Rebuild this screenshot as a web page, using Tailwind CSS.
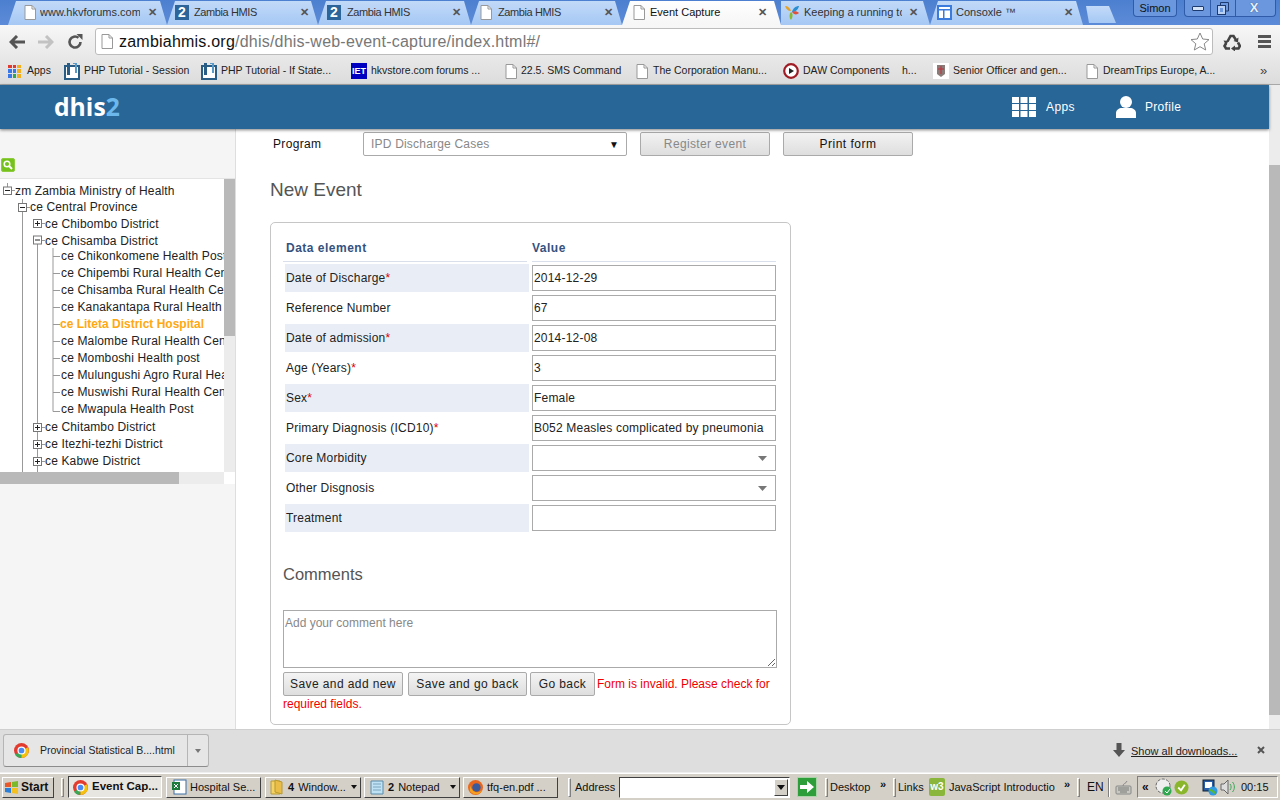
<!DOCTYPE html>
<html>
<head>
<meta charset="utf-8">
<title>Event Capture</title>
<script src="https://cdn.jsdelivr.net/npm/@tailwindcss/browser@4"></script>
</head>
<body class="[font-family:'Liberation_Sans',sans-serif]">
<div class="w-[1280px] h-[800px] overflow-hidden flex flex-col bg-white text-[12px] text-[#222]">

  <!-- tab strip -->
  <div class="h-[25px] flex pl-[8px] bg-gradient-to-b from-[#4d7fd0] to-[#5c8cd8] relative text-[11px]">
    <div class="w-[159px] h-[25px] flex items-center pl-[16px] pr-[10px] gap-[4px] bg-gradient-to-b from-[#c3daf9] to-[#a5c8f4] [clip-path:polygon(8px_1px,calc(100%-7px)_1px,100%_100%,0_100%)] text-[#333]">
      <svg class="w-[12px] h-[15px] shrink-0" viewBox="0 0 12 15"><path d="M1 .5h7l3.500 3.500v10.500h-10.500z" fill="#fff" stroke="#999"/><path d="M8 .5v3.500h3.500" fill="none" stroke="#999"/></svg>
      <span class="whitespace-nowrap overflow-hidden w-[100px]">www.hkvforums.com</span>
      <span class="font-bold text-[#555] text-[11px] ml-auto">✕</span>
    </div>
    <div class="w-[151px] h-[25px] flex items-center pl-[8px] pr-[9px] gap-[5px] bg-gradient-to-b from-[#c3daf9] to-[#a5c8f4] [clip-path:polygon(8px_1px,calc(100%-7px)_1px,100%_100%,0_100%)] text-[#333]">
      <span class="w-[14px] h-[15px] bg-[#2b6599] text-white font-bold text-[14px] leading-[15px] text-center shrink-0">2</span>
      <span class="whitespace-nowrap tracking-[-0.4px]">Zambia HMIS</span>
      <span class="font-bold text-[#555] ml-auto">✕</span>
    </div>
    <div class="w-[153px] h-[25px] flex items-center pl-[9px] pr-[10px] gap-[6px] bg-gradient-to-b from-[#c3daf9] to-[#a5c8f4] [clip-path:polygon(8px_1px,calc(100%-7px)_1px,100%_100%,0_100%)] text-[#333]">
      <span class="w-[14px] h-[15px] bg-[#2b6599] text-white font-bold text-[14px] leading-[15px] text-center shrink-0">2</span>
      <span class="whitespace-nowrap tracking-[-0.4px]">Zambia HMIS</span>
      <span class="font-bold text-[#555] ml-auto">✕</span>
    </div>
    <div class="w-[151px] h-[25px] flex items-center pl-[9px] pr-[9px] gap-[6px] bg-gradient-to-b from-[#c3daf9] to-[#a5c8f4] [clip-path:polygon(8px_1px,calc(100%-7px)_1px,100%_100%,0_100%)] text-[#333]">
      <svg class="w-[12px] h-[15px] shrink-0" viewBox="0 0 12 15"><path d="M1 .5h7l3.500 3.500v10.500h-10.500z" fill="#fff" stroke="#999"/><path d="M8 .5v3.500h3.500" fill="none" stroke="#999"/></svg>
      <span class="whitespace-nowrap tracking-[-0.4px]">Zambia HMIS</span>
      <span class="font-bold text-[#555] ml-auto">✕</span>
    </div>
    <div class="w-[159px] h-[25px] flex items-center pl-[11px] pr-[14px] gap-[5px] bg-gradient-to-b from-[#ffffff] to-[#f6f6f6] [clip-path:polygon(8px_1px,calc(100%-7px)_1px,100%_100%,0_100%)] text-[#111]">
      <svg class="w-[12px] h-[15px] shrink-0" viewBox="0 0 12 15"><path d="M1 .5h7l3.500 3.500v10.500h-10.500z" fill="#fff" stroke="#999"/><path d="M8 .5v3.500h3.500" fill="none" stroke="#999"/></svg>
      <span class="whitespace-nowrap">Event Capture</span>
      <span class="font-bold text-[#555] ml-auto">✕</span>
    </div>
    <div class="w-[149px] h-[25px] flex items-center pl-[3px] pr-[12px] gap-[4px] bg-gradient-to-b from-[#c3daf9] to-[#a5c8f4] [clip-path:polygon(0_1px,calc(100%-7px)_1px,100%_100%,0_100%)] text-[#333]">
      <svg class="w-[16px] h-[16px] shrink-0" viewBox="0 0 16 16"><path d="M1 1c3 0 5 2 6 5C4 6 2 4 1 1z" fill="#e8a020"/><path d="M15 1c-3 0-6 2-7 6 3 0 6-2 7-6z" fill="#2a8fd0"/><path d="M7 7c2 1 2 5 0 8-2-2-2-6 0-8z" fill="#88b82c"/><path d="M8 7c2-1 5-1 7 1-2 2-5 2-7-1z" fill="#e0503a"/></svg>
      <span class="whitespace-nowrap overflow-hidden w-[98px]">Keeping a running to</span>
      <span class="font-bold text-[#555] ml-auto">✕</span>
    </div>
    <div class="w-[153px] h-[25px] flex items-center pl-[7px] pr-[10px] gap-[4px] bg-gradient-to-b from-[#c3daf9] to-[#a5c8f4] [clip-path:polygon(8px_1px,calc(100%-7px)_1px,100%_100%,0_100%)] text-[#333]">
      <svg class="w-[15px] h-[15px] shrink-0" viewBox="0 0 15 15"><rect width="15" height="15" fill="#3a7bdc"/><rect x="2" y="2" width="11" height="11" fill="#fff"/><rect x="2" y="4" width="11" height="1.500" fill="#3a7bdc"/><rect x="6" y="5" width="1.500" height="8" fill="#3a7bdc"/></svg>
      <span class="whitespace-nowrap">Consoxle ™</span>
      <span class="font-bold text-[#555] ml-auto">✕</span>
    </div>
    <div class="w-[32px] h-[17px] mt-[6px] ml-[1px] bg-gradient-to-b from-[#c3daf9] to-[#a5c8f4] [clip-path:polygon(2px_0,calc(100%-7px)_0,100%_100%,5px_100%)]"></div>
    <div class="absolute top-0 left-[1133px] w-[44px] h-[17px] rounded-b-[4px] border border-t-0 border-[#2f5ba8] bg-[#6a97dd] text-[11px] leading-[17px] text-center text-[#111]">Simon</div>
    <div class="absolute top-0 left-[1184px] w-[92px] h-[17px] rounded-b-[4px] border border-t-0 border-[#2f5ba8] bg-[#6a97dd] flex">
      <div class="w-[26px] border-r border-[#2f5ba8] flex items-center justify-center"><span class="w-[12px] h-[5px] border border-[#1d3a70] bg-[#d6e4f8] rounded-[1px]"></span></div>
      <div class="w-[25px] border-r border-[#2f5ba8] flex items-center justify-center">
        <svg class="w-[12px] h-[13px]" viewBox="0 0 12 13"><path d="M3.500 3V.5h8V9H9" fill="none" stroke="#1d3a70"/><rect x=".5" y="3.500" width="8" height="9" fill="#b9d0f2" stroke="#1d3a70"/><rect x="3" y="6" width="3" height="4" fill="#6a97dd"/></svg>
      </div>
      <div class="flex-1 pr-[3px] text-center text-[#e8f0fb] font-bold text-[13px] leading-[15px] [text-shadow:0_0_1px_#1d3a70]">X</div>
    </div>
  </div>

  <!-- toolbar + bookmarks -->
  <div class="h-[60px] bg-gradient-to-b from-[#f7f7f7] to-[#dcdcdc] border-b border-[#a8a8a8] flex flex-col">
    <div class="h-[33px] flex items-center relative">
      <svg class="w-[16px] h-[14px] ml-[9px] shrink-0" viewBox="0 0 16 14"><path d="M8 1 2 7l6 6M2 7h14" fill="none" stroke="#555" stroke-width="3"/></svg>
      <svg class="w-[16px] h-[14px] ml-[13px] shrink-0" viewBox="0 0 16 14"><path d="M8 1l6 6-6 6M14 7H0" fill="none" stroke="#c2c2c2" stroke-width="3"/></svg>
      <svg class="w-[16px] h-[16px] ml-[13px] shrink-0" viewBox="0 0 16 16"><path d="M13.500 8A5.500 5.500 0 1 1 11.500 3.800" fill="none" stroke="#555" stroke-width="2.600"/><path d="M9.500 0h6v6z" fill="#555"/></svg>
      <div class="ml-[12px] w-[1118px] h-[27px] bg-white border border-[#bcbcbc] rounded-[3px] flex items-center pl-[5px]">
        <svg class="w-[12px] h-[15px] shrink-0" viewBox="0 0 12 15"><path d="M1 .5h7l3.500 3.500v10.500h-10.500z" fill="#fff" stroke="#999"/><path d="M8 .5v3.500h3.500" fill="none" stroke="#999"/></svg>
        <span class="ml-[6px] text-[16px] text-[#111] whitespace-nowrap tracking-[0.22px]">zambiahmis.org<span class="text-[#777]">/dhis/dhis-web-event-capture/index.html#/</span></span>
        <svg class="w-[20px] h-[19px] ml-auto mr-[2px]" viewBox="0 0 20 19"><path d="M10 1l2.700 6 6.300.6-4.800 4.200 1.500 6.200L10 14.700 4.300 18l1.500-6.200L1 7.600 7.300 7z" fill="#fff" stroke="#888"/></svg>
      </div>
      <svg class="w-[18px] h-[18px] ml-[10px] shrink-0" viewBox="0 0 18 18"><g fill="none" stroke="#444" stroke-width="2.600"><path d="M4.500 8.500 7.500 3h3l2.500 4"/><path d="M15 9.500l2 3.500-1.500 2.500H11"/><path d="M7 15.500H3L1.500 13l1.700-3"/></g><path d="M15.500 4.500l-.5 5-4.500-1.500zM12 12.500v6l-4-3zM.5 7.500l5 .5-2.500 4z" fill="#444"/></svg>
      <span class="ml-[17px] w-[13px] h-[13px] flex flex-col justify-between"><span class="h-[3px] bg-[#555]"></span><span class="h-[3px] bg-[#555]"></span><span class="h-[3px] bg-[#555]"></span></span>
    </div>
    <div class="h-[26px] flex items-center text-[10.500px] text-[#222] relative whitespace-nowrap">
      <span class="ml-[8px] w-[13px] h-[13px] grid grid-cols-3 gap-[1px] shrink-0">
        <i class="bg-[#e23a2e]"></i><i class="bg-[#e23a2e]"></i><i class="bg-[#f2b01e]"></i>
        <i class="bg-[#3b78e7]"></i><i class="bg-[#3b78e7]"></i><i class="bg-[#f2b01e]"></i>
        <i class="bg-[#3b78e7]"></i><i class="bg-[#2fa84f]"></i><i class="bg-[#f2b01e]"></i>
      </span>
      <span class="ml-[6px] w-[37px] shrink-0">Apps</span>
      <svg class="w-[16px] h-[17px] shrink-0" viewBox="0 0 16 17"><rect x="1" y="3" width="14" height="13" fill="#fff" stroke="#2a5d85" stroke-width="2"/><rect x="3" y="0" width="3" height="2" fill="#2a5d85"/><rect x="3" y="4" width="3" height="8" fill="#2a5d85"/><path d="M9 0h3v10" fill="none" stroke="#5a9ac8" stroke-width="2"/></svg>
      <span class="ml-[4px] w-[105px] shrink-0">PHP Tutorial - Session</span>
      <svg class="ml-[12px] w-[16px] h-[17px] shrink-0" viewBox="0 0 16 17"><rect x="1" y="3" width="14" height="13" fill="#fff" stroke="#2a5d85" stroke-width="2"/><rect x="3" y="0" width="3" height="2" fill="#2a5d85"/><rect x="3" y="4" width="3" height="8" fill="#2a5d85"/><path d="M9 0h3v10" fill="none" stroke="#5a9ac8" stroke-width="2"/></svg>
      <span class="ml-[4px] w-[115px] shrink-0">PHP Tutorial - If State...</span>
      <span class="ml-[15px] w-[16px] h-[16px] bg-[#0000c0] text-white text-center font-bold text-[9px] leading-[16px] shrink-0">IET</span>
      <span class="ml-[4px] w-[114px] shrink-0">hkvstore.com forums ...</span>
      <svg class="ml-[20px] w-[12px] h-[15px] shrink-0" viewBox="0 0 12 15"><path d="M1 .5h7l3.500 3.500v10.500h-10.500z" fill="#fff" stroke="#999"/><path d="M8 .5v3.500h3.500" fill="none" stroke="#999"/></svg>
      <span class="ml-[4px] w-[100px] shrink-0">22.5. SMS Command</span>
      <svg class="ml-[15px] w-[12px] h-[15px] shrink-0" viewBox="0 0 12 15"><path d="M1 .5h7l3.500 3.500v10.500h-10.500z" fill="#fff" stroke="#999"/><path d="M8 .5v3.500h3.500" fill="none" stroke="#999"/></svg>
      <span class="ml-[5px] w-[117px] shrink-0">The Corporation Manu...</span>
      <svg class="ml-[13px] w-[16px] h-[16px] shrink-0" viewBox="0 0 16 16"><circle cx="8" cy="8" r="6.800" fill="#fff" stroke="#a01c24" stroke-width="2.200"/><path d="M6 5l5 3-5 3z" fill="#222"/></svg>
      <span class="ml-[4px] w-[87px] shrink-0">DAW Components</span>
      <span class="ml-[12px] w-[16px] shrink-0">h...</span>
      <svg class="ml-[15px] w-[16px] h-[16px] shrink-0" viewBox="0 0 16 16"><rect width="16" height="16" fill="#fff"/><path d="M4 2h8v9l-4 3-4-3z" fill="#8a7a78"/><path d="M8 3v8M5 6h6" stroke="#c0303a"/></svg>
      <span class="ml-[4px] w-[118px] shrink-0">Senior Officer and gen...</span>
      <svg class="ml-[15px] w-[12px] h-[15px] shrink-0" viewBox="0 0 12 15"><path d="M1 .5h7l3.500 3.500v10.500h-10.500z" fill="#fff" stroke="#999"/><path d="M8 .5v3.500h3.500" fill="none" stroke="#999"/></svg>
      <span class="ml-[5px] w-[118px] shrink-0">DreamTrips  Europe, A...</span>
      <span class="absolute left-[1260px] text-[13px] text-[#444]">»</span>
    </div>
  </div>

  <!-- browser viewport -->
  <div class="h-[644px] flex bg-white">
    <div class="w-[1269px] flex flex-col">
      <div class="h-[44px] shrink-0 bg-[#276696] flex items-center relative z-10 shadow-[0_1px_3px_rgba(0,0,0,0.5)] text-white">
        <span class="ml-[54px] w-[66px] [font-family:'Open_Sans',sans-serif] font-bold text-[24.700px] leading-none whitespace-nowrap">dhis<span class="text-[#6cb8ec]">2</span></span>
        <svg class="ml-[892px] w-[24px] h-[20px] shrink-0" viewBox="0 0 24 20" fill="#fff"><rect width="7" height="6"/><rect x="8.500" width="7" height="6"/><rect x="17" width="7" height="6"/><rect y="7" width="7" height="6"/><rect x="8.500" y="7" width="7" height="6"/><rect x="17" y="7" width="7" height="6"/><rect y="14" width="7" height="6"/><rect x="8.500" y="14" width="7" height="6"/><rect x="17" y="14" width="7" height="6"/></svg>
        <span class="ml-[10px] w-[29px] text-[12px] tracking-[0.4px]">Apps</span>
        <svg class="ml-[41px] w-[20px] h-[22px] shrink-0" viewBox="0 0 20 22" fill="#fff"><circle cx="10" cy="6" r="6"/><path d="M0 22v-5c0-3 3-5 6-5h8c3 0 6 2 6 5v5z"/></svg>
        <span class="ml-[9px] text-[12px] tracking-[0.3px]">Profile</span>
      </div>
      <div class="flex-1 flex min-h-0">
        <!-- sidebar -->
        <div class="w-[236px] shrink-0 bg-[#f5f5f5] border-r border-[#dedede] flex flex-col">
          <div class="h-[49px] shrink-0 flex items-end pb-[6px] pl-[1px]">
            <span class="w-[14px] h-[14px] rounded-[2px] bg-[#76c21c] border border-[#8fcc40] flex items-center justify-center">
              <svg class="w-[10px] h-[10px]" viewBox="0 0 10 10"><circle cx="4" cy="4" r="2.800" fill="none" stroke="#fff" stroke-width="1.500"/><path d="M6 6l3 3" stroke="#fff" stroke-width="2"/></svg>
            </span>
          </div>
          <div class="h-[306px] w-[235px] shrink-0 bg-white border-t border-[#e4e4e4] flex flex-col tracking-[0.15px]">
            <div class="h-[293px] flex">
              <div class="w-[224px] relative overflow-hidden pt-[4px] text-[12px] text-[#222]">
                <svg class="absolute left-0 top-0 w-[224px] h-[293px]" viewBox="0 179 224 293">
                  <g stroke="#999" fill="none">
                    <path d="M7.500 183v4M12 190.500h3M22.500 199v4M27 207.500h3M22.500 212v260M37.500 243v229M42 223.500h3M42 240.500h3M42 427.500h3M42 444.500h3M42 461.500h3M53 248v163.500h7M53 256.500h7M53 273.500h7M53 290.500h7M53 307.500h7M53 324.500h7M53 341.500h7M53 358.500h7M53 375.500h7M53 392.500h7"/>
                    <g fill="#fff" stroke="#777">
                      <rect x="3.500" y="187" width="8" height="7.500"/><rect x="18.500" y="203.500" width="8" height="8"/><rect x="33.500" y="219.500" width="8" height="8"/><rect x="33.500" y="236" width="8" height="8"/><rect x="33.500" y="423.500" width="8" height="8"/><rect x="33.500" y="440.500" width="8" height="8"/><rect x="33.500" y="457.500" width="8" height="8"/>
                    </g>
                    <path stroke="#222" d="M5 190.500h5M20 207.500h5M35 223.500h5M37.500 221v5M35 240h5M35 427.500h5M37.500 425v5M35 444.500h5M37.500 442v5M35 461.500h5M37.500 459v5"/>
                  </g>
                </svg>
                <div class="h-[16px] leading-[16px] pl-[15px] whitespace-nowrap relative">zm Zambia Ministry of Health</div>
                <div class="h-[17px] leading-[17px] pl-[30px] whitespace-nowrap relative">ce Central Province</div>
                <div class="h-[16px] leading-[16px] pl-[45px] whitespace-nowrap relative">ce Chibombo District</div>
                <div class="h-[16px] leading-[18px] pl-[45px] whitespace-nowrap relative">ce Chisamba District</div>
                <div class="h-[17px] leading-[17px] pl-[61px] whitespace-nowrap relative">ce Chikonkomene Health Post</div>
                <div class="h-[17px] leading-[17px] pl-[61px] whitespace-nowrap relative">ce Chipembi Rural Health Centre</div>
                <div class="h-[17px] leading-[17px] pl-[61px] whitespace-nowrap relative">ce Chisamba Rural Health Centre</div>
                <div class="h-[17px] leading-[17px] pl-[61px] whitespace-nowrap relative">ce Kanakantapa Rural Health Centre</div>
                <div class="h-[17px] leading-[17px] pl-[60px] whitespace-nowrap relative font-bold text-[#ffa812] tracking-normal">ce Liteta District Hospital</div>
                <div class="h-[17px] leading-[17px] pl-[61px] whitespace-nowrap relative">ce Malombe Rural Health Centre</div>
                <div class="h-[17px] leading-[17px] pl-[61px] whitespace-nowrap relative">ce Momboshi Health post</div>
                <div class="h-[17px] leading-[17px] pl-[61px] whitespace-nowrap relative">ce Mulungushi Agro Rural Health</div>
                <div class="h-[17px] leading-[17px] pl-[61px] whitespace-nowrap relative">ce Muswishi Rural Health Centre</div>
                <div class="h-[17px] leading-[17px] pl-[61px] whitespace-nowrap relative">ce Mwapula Health Post</div>
                <div class="h-[18px] leading-[18px] pl-[45px] whitespace-nowrap relative">ce Chitambo District</div>
                <div class="h-[17px] leading-[17px] pl-[45px] whitespace-nowrap relative">ce Itezhi-tezhi District</div>
                <div class="h-[17px] leading-[17px] pl-[45px] whitespace-nowrap relative">ce Kabwe District</div>
              </div>
              <div class="w-[11px] bg-[#ececec]"><div class="h-[157px] bg-[#b9b9b9]"></div></div>
            </div>
            <div class="h-[12px] flex">
              <div class="w-[224px] bg-[#ececec]"><div class="w-[179px] h-full bg-[#b9b9b9]"></div></div>
            </div>
          </div>
        </div>
        <!-- main -->
        <div class="flex-1 min-w-0 pt-[3px] pl-[37px] tracking-[0.2px] relative">
          <div class="flex items-center h-[24px] tracking-[0.35px]">
            <span class="w-[90px] text-[#111]">Program</span>
            <div class="w-[264px] h-[24px] border border-[#aaa] rounded-[2px] bg-white flex items-center pl-[7px] pr-[7px] text-[#888] tracking-[0.2px]">
              <span>IPD Discharge Cases</span>
              <span class="ml-auto text-[#111] text-[10px]">▼</span>
            </div>
            <button class="ml-[13px] w-[130px] h-[24px] border border-[#aaa] rounded-[2px] bg-gradient-to-b from-[#f2f2f2] to-[#dedede] text-[#888]">Register event</button>
            <button class="ml-[13px] w-[130px] h-[24px] border border-[#aaa] rounded-[2px] bg-gradient-to-b from-[#f2f2f2] to-[#dedede] text-[#111] tracking-[0.5px]">Print form</button>
          </div>
          <h2 class="mt-[23px] -ml-[3px] h-[22px] text-[19px] leading-[22px] text-[#555] tracking-normal font-normal">New Event</h2>
          <div class="mt-[21px] w-[521px] h-[503px] -ml-[3px] border border-[#c6c6c6] rounded-[5px] pl-[12px] pt-[15px]">
            <div class="flex gap-[5px] w-[493px] h-[24px] font-bold text-[#35527f] tracking-[0.5px]">
              <div class="w-[244px] border-b border-[#d9e0ec] pl-[3px] leading-[21px]">Data element</div>
              <div class="w-[244px] border-b border-[#d9e0ec] leading-[21px]">Value</div>
            </div>
            <div class="flex flex-col gap-[2px] mt-[2px]">
              <div class="h-[28px] flex items-center"><span class="w-[244px] h-full bg-[#e9eef6] pl-[1px] flex items-center ml-[2px]">Date of Discharge<span class="text-[#e00000]">*</span></span><input class="ml-[3px] w-[244px] h-[26px] border border-[#aaa] bg-white px-[1px] text-[#222]" value="2014-12-29"></div>
              <div class="h-[28px] flex items-center"><span class="w-[244px] h-full pl-[1px] flex items-center ml-[2px]">Reference Number</span><input class="ml-[3px] w-[244px] h-[26px] border border-[#aaa] bg-white px-[1px] text-[#222]" value="67"></div>
              <div class="h-[28px] flex items-center"><span class="w-[244px] h-full bg-[#e9eef6] pl-[1px] flex items-center ml-[2px]">Date of admission<span class="text-[#e00000]">*</span></span><input class="ml-[3px] w-[244px] h-[26px] border border-[#aaa] bg-white px-[1px] text-[#222]" value="2014-12-08"></div>
              <div class="h-[28px] flex items-center"><span class="w-[244px] h-full pl-[1px] flex items-center ml-[2px]">Age (Years)<span class="text-[#e00000]">*</span></span><input class="ml-[3px] w-[244px] h-[26px] border border-[#aaa] bg-white px-[1px] text-[#222]" value="3"></div>
              <div class="h-[28px] flex items-center"><span class="w-[244px] h-full bg-[#e9eef6] pl-[1px] flex items-center ml-[2px]">Sex<span class="text-[#e00000]">*</span></span><input class="ml-[3px] w-[244px] h-[26px] border border-[#aaa] bg-white px-[1px] text-[#222]" value="Female"></div>
              <div class="h-[28px] flex items-center"><span class="w-[244px] h-full pl-[1px] flex items-center ml-[2px]">Primary Diagnosis (ICD10)<span class="text-[#e00000]">*</span></span><input class="ml-[3px] w-[244px] h-[26px] border border-[#aaa] bg-white px-[1px] text-[#222]" value="B052 Measles complicated by pneumonia"></div>
              <div class="h-[28px] flex items-center"><span class="w-[244px] h-full bg-[#e9eef6] pl-[1px] flex items-center ml-[2px]">Core Morbidity</span><div class="ml-[3px] w-[244px] h-[26px] border border-[#aaa] bg-white flex items-center justify-end pr-[8px]"><svg class="w-[9px] h-[5px]" viewBox="0 0 9 5"><path d="M0 0h9L4.500 5z" fill="#777"/></svg></div></div>
              <div class="h-[28px] flex items-center"><span class="w-[244px] h-full pl-[1px] flex items-center ml-[2px]">Other Disgnosis</span><div class="ml-[3px] w-[244px] h-[26px] border border-[#aaa] bg-white flex items-center justify-end pr-[8px]"><svg class="w-[9px] h-[5px]" viewBox="0 0 9 5"><path d="M0 0h9L4.500 5z" fill="#777"/></svg></div></div>
              <div class="h-[28px] flex items-center"><span class="w-[244px] h-full bg-[#e9eef6] pl-[1px] flex items-center ml-[2px]">Treatment</span><input class="ml-[3px] w-[244px] h-[26px] border border-[#aaa] bg-white px-[1px] text-[#222]" value=""></div>
            </div>
            <h3 class="mt-[32px] h-[20px] text-[16.500px] leading-[20px] text-[#555] tracking-normal font-normal">Comments</h3>
            <textarea class="block mt-[26px] w-[494px] h-[58px] border border-[#aaa] bg-white px-[1px] py-[3px] text-[12px] tracking-normal placeholder:text-[#888] outline-none" placeholder="Add your comment here"></textarea>
            <div class="mt-[4px] w-[496px] leading-[16px] text-[#f00000] tracking-normal">
              <button class="h-[24px] w-[120px] border border-[#aaa] rounded-[2px] bg-gradient-to-b from-[#f4f4f4] to-[#dedede] text-[#222] tracking-[0.4px]">Save and add new</button><button class="ml-[5px] h-[24px] w-[119px] border border-[#aaa] rounded-[2px] bg-gradient-to-b from-[#f4f4f4] to-[#dedede] text-[#222] tracking-[0.4px]">Save and go back</button><button class="ml-[3px] h-[24px] w-[65px] border border-[#aaa] rounded-[2px] bg-gradient-to-b from-[#f4f4f4] to-[#dedede] text-[#222] tracking-[0.4px]">Go back</button><span class="ml-[2px]">Form is invalid. Please check for required fields.</span>
            </div>
          </div>
        </div>
      </div>
    </div>
    <div class="w-[11px] bg-[#ececec]"><div class="mt-[80px] h-[550px] bg-[#b9b9b9]"></div></div>
  </div>

  <!-- downloads bar -->
  <div class="h-[44px] bg-[#dedede] border-t border-[#cfcfcf] border-b border-b-[#efefef] flex items-start relative">
    <div class="ml-[3px] mt-[4px] w-[206px] h-[33px] rounded-[3px] border border-[#b5b5b5] border-b-[#8c8c8c] bg-[#e6e6e6] flex items-center">
      <svg class="ml-[10px] w-[15px] h-[15px]" viewBox="0 0 16 16"><circle cx="8" cy="8" r="8" fill="#e33b2e"/><path d="M8 8L1 12.500A8 8 0 0 0 8 16z" fill="#3aa757"/><path d="M8 8l7 -3.500A8 8 0 0 1 8 16z" fill="#f4c20d"/><circle cx="8" cy="8" r="3.700" fill="#4a8af4" stroke="#fff" stroke-width="1.300"/></svg>
      <span class="ml-[11px] text-[10.500px] text-[#222] whitespace-nowrap w-[147px]">Provincial Statistical B....html</span>
      <span class="h-full border-l border-[#b5b5b5] flex-1 flex items-center justify-center"><span class="w-0 h-0 border-x-[3px] border-x-transparent border-t-[4px] border-t-[#777]"></span></span>
    </div>
    <svg class="absolute left-[1113px] top-[13px] w-[12px] h-[14px]" viewBox="0 0 12 14"><path d="M3.500 0h5v7H12l-6 7-6-7h3.500z" fill="#555"/></svg>
    <span class="absolute left-[1131px] top-[13px] text-[11px] underline text-[#222] whitespace-nowrap">Show all downloads...</span>
    <svg class="absolute left-[1257px] top-[16px] w-[8px] h-[8px]" viewBox="0 0 8 8"><path d="M1 1l6 6M7 1L1 7" stroke="#555" stroke-width="2"/></svg>
  </div>

  <!-- taskbar -->
  <div class="h-[27px] bg-[#d4d0c8] border-t border-white flex items-center text-[11px] text-[#111] relative whitespace-nowrap">
    <button class="ml-[2px] w-[52px] h-[21px] shrink-0 bg-[#d4d0c8] border border-t-white border-l-white border-r-[#404040] border-b-[#404040] flex items-center pl-[1px] gap-[2px] font-bold text-[12px]">
      <svg class="w-[15px] h-[15px]" viewBox="0 0 15 15"><path d="M1 3l6-1v5H1z" fill="#e8582a"/><path d="M8 2l6-1v6H8z" fill="#7ab82c"/><path d="M1 8h6v5l-6-1z" fill="#2a7fd8"/><path d="M8 8h6v6l-6-1z" fill="#f4c020"/></svg>Start
    </button>
    <span class="ml-[7px] w-[3px] h-[19px] shrink-0 border border-t-white border-l-white border-r-[#808080] border-b-[#808080]"></span>
    <button class="ml-[4px] w-[94px] h-[22px] shrink-0 bg-[#e8e6e0] border border-t-[#404040] border-l-[#404040] border-r-white border-b-white flex items-center pl-[4px] gap-[4px] font-bold text-[11.500px]">
      <svg class="w-[15px] h-[15px] shrink-0" viewBox="0 0 16 16"><circle cx="8" cy="8" r="8" fill="#e33b2e"/><path d="M8 8L1 12.500A8 8 0 0 0 8 16z" fill="#3aa757"/><path d="M8 8l7 -3.500A8 8 0 0 1 8 16z" fill="#f4c20d"/><circle cx="8" cy="8" r="3.700" fill="#4a8af4" stroke="#fff" stroke-width="1.300"/></svg>Event Cap...
    </button>
    <button class="ml-[4px] w-[95px] h-[21px] shrink-0 bg-[#d4d0c8] border border-t-white border-l-white border-r-[#404040] border-b-[#404040] flex items-center pl-[4px] gap-[3px]">
      <svg class="w-[16px] h-[16px] shrink-0" viewBox="0 0 16 16"><rect x="3" y="1" width="12" height="14" fill="#fff" stroke="#3a6ea5"/><rect x="1" y="3" width="8" height="8" fill="#1d7a3a"/><path d="M3 5l4 4M7 5L3 9" stroke="#fff"/></svg>Hospital Se...
    </button>
    <button class="ml-[4px] w-[96px] h-[21px] shrink-0 bg-[#d4d0c8] border border-t-white border-l-white border-r-[#404040] border-b-[#404040] flex items-center pl-[4px] gap-[4px]">
      <svg class="w-[14px] h-[16px] shrink-0" viewBox="0 0 14 16"><path d="M1 2h9v13H1z" fill="#f4d264" stroke="#b89a30"/><path d="M5 1l7 2v12l-7-2z" fill="#e9bd48" stroke="#b89a30"/></svg><b>4</b> Window...<span class="ml-auto mr-[3px] w-0 h-0 border-x-[3px] border-x-transparent border-t-[4px] border-t-[#111]"></span>
    </button>
    <button class="ml-[3px] w-[96px] h-[21px] shrink-0 bg-[#d4d0c8] border border-t-white border-l-white border-r-[#404040] border-b-[#404040] flex items-center pl-[4px] gap-[4px]">
      <svg class="w-[15px] h-[16px] shrink-0" viewBox="0 0 15 16"><path d="M2 2h12v13H2z" fill="#bfe3f4" stroke="#5a8aa8"/><path d="M4 5h8M4 8h8M4 11h8" stroke="#7aa4bc"/></svg><b>2</b> Notepad<span class="ml-auto mr-[3px] w-0 h-0 border-x-[3px] border-x-transparent border-t-[4px] border-t-[#111]"></span>
    </button>
    <button class="ml-[3px] w-[95px] h-[21px] shrink-0 bg-[#d4d0c8] border border-t-white border-l-white border-r-[#404040] border-b-[#404040] flex items-center pl-[4px] gap-[4px]">
      <svg class="w-[15px] h-[15px] shrink-0" viewBox="0 0 16 16"><circle cx="8" cy="8" r="8" fill="#e8661e"/><circle cx="9" cy="8" r="4.500" fill="#3a5a9c"/><path d="M2 5c2 8 8 10 13 6-2 5-9 6-13 1z" fill="#f4a020"/></svg>tfq-en.pdf ...
    </button>
    <span class="ml-[10px] w-[3px] h-[19px] shrink-0 border border-t-white border-l-white border-r-[#808080] border-b-[#808080]"></span>
    <span class="ml-[4px] w-[39px] shrink-0">Address</span>
    <div class="ml-[5px] w-[171px] h-[21px] shrink-0 bg-white border border-t-[#404040] border-l-[#404040] border-r-white border-b-white flex justify-end items-center pr-[1px]">
      <span class="w-[14px] h-[17px] bg-[#d4d0c8] border border-t-white border-l-white border-r-[#404040] border-b-[#404040] flex items-center justify-center"><span class="w-0 h-0 border-x-[4px] border-x-transparent border-t-[5px] border-t-[#111]"></span></span>
    </div>
    <span class="ml-[7px] w-[20px] h-[20px] shrink-0 bg-[#2e9e3a] border border-[#a8d4a8] flex items-center justify-center">
      <svg class="w-[14px] h-[12px]" viewBox="0 0 14 12"><path d="M0 4h7V0l7 6-7 6V8H0z" fill="#fff"/></svg>
    </span>
    <span class="ml-[8px] w-[3px] h-[19px] shrink-0 border border-t-white border-l-white border-r-[#808080] border-b-[#808080]"></span>
    <span class="ml-[2px] w-[40px] shrink-0">Desktop</span>
    <span class="ml-[10px] w-[7px] shrink-0 font-bold -mt-[6px]">»</span>
    <span class="ml-[6px] w-[3px] h-[19px] shrink-0 border border-t-white border-l-white border-r-[#808080] border-b-[#808080]"></span>
    <span class="ml-[2px] w-[23px] shrink-0">Links</span>
    <span class="ml-[8px] w-[16px] h-[18px] shrink-0 rounded-[2px] bg-[#8ab63c] text-white text-[10px] font-bold text-center leading-[17px]">w3</span>
    <span class="ml-[4px] w-[105px] shrink-0">JavaScript Introductio</span>
    <span class="ml-[10px] w-[7px] shrink-0 font-bold -mt-[6px]">»</span>
    <span class="ml-[6px] w-[3px] h-[19px] shrink-0 border border-t-white border-l-white border-r-[#808080] border-b-[#808080]"></span>
    <span class="ml-[7px] w-[14px] shrink-0 text-[12px]">EN</span>
    <span class="ml-[7px] w-[2px] h-[19px] shrink-0 border-l border-[#808080] border-r border-r-white"></span>
    <svg class="ml-[5px] w-[17px] h-[15px] shrink-0" viewBox="0 0 17 15"><rect x="1" y="6" width="15" height="8" rx="1" fill="#c8c8c0" stroke="#888"/><path d="M3 8h11M3 10h11M5 12h7" stroke="#777"/><path d="M8 6c0-3 3-2 4-5" fill="none" stroke="#888"/></svg>
    <div class="ml-[5px] w-[141px] h-[22px] shrink-0 border border-t-[#808080] border-l-[#808080] border-r-white border-b-white flex items-center">
      <span class="ml-[4px] w-[8px] shrink-0 font-bold text-[12px]">«</span>
      <svg class="ml-[5px] w-[18px] h-[18px] shrink-0" viewBox="0 0 18 18"><circle cx="8" cy="8" r="7" fill="#eee" stroke="#666" stroke-dasharray="3 1.500"/><circle cx="12" cy="13" r="4.500" fill="#2fa84f"/><path d="M10 13l2 2 3-4" fill="none" stroke="#fff"/></svg>
      <svg class="ml-[1px] w-[15px] h-[15px] shrink-0" viewBox="0 0 16 16"><circle cx="8" cy="8" r="7.500" fill="#8ab62c"/><path d="M4.500 8l3 3 4-6" fill="none" stroke="#fff" stroke-width="2"/></svg>
      <svg class="ml-[13px] w-[16px] h-[17px] shrink-0" viewBox="0 0 16 17"><rect x="1" y="1" width="11" height="11" fill="#2a5da8" stroke="#123"/><rect x="3" y="3" width="7" height="6" fill="#fff"/><circle cx="11" cy="12" r="4.500" fill="#2f9ae0"/><path d="M8 11c2 0 3 2 5 3" stroke="#5ab82c" stroke-width="2" fill="none"/></svg>
      <svg class="ml-[2px] w-[16px] h-[16px] shrink-0" viewBox="0 0 16 16"><path d="M1 5h3l4-4v14l-4-4H1z" fill="#ddd" stroke="#666"/><path d="M10 5c1.500 2 1.500 4 0 6M12.500 3c2.500 3 2.500 7 0 10" fill="none" stroke="#3aa757"/></svg>
      <span class="ml-[5px] shrink-0">00:15</span>
    </div>
  </div>
</div>
</body>
</html>
